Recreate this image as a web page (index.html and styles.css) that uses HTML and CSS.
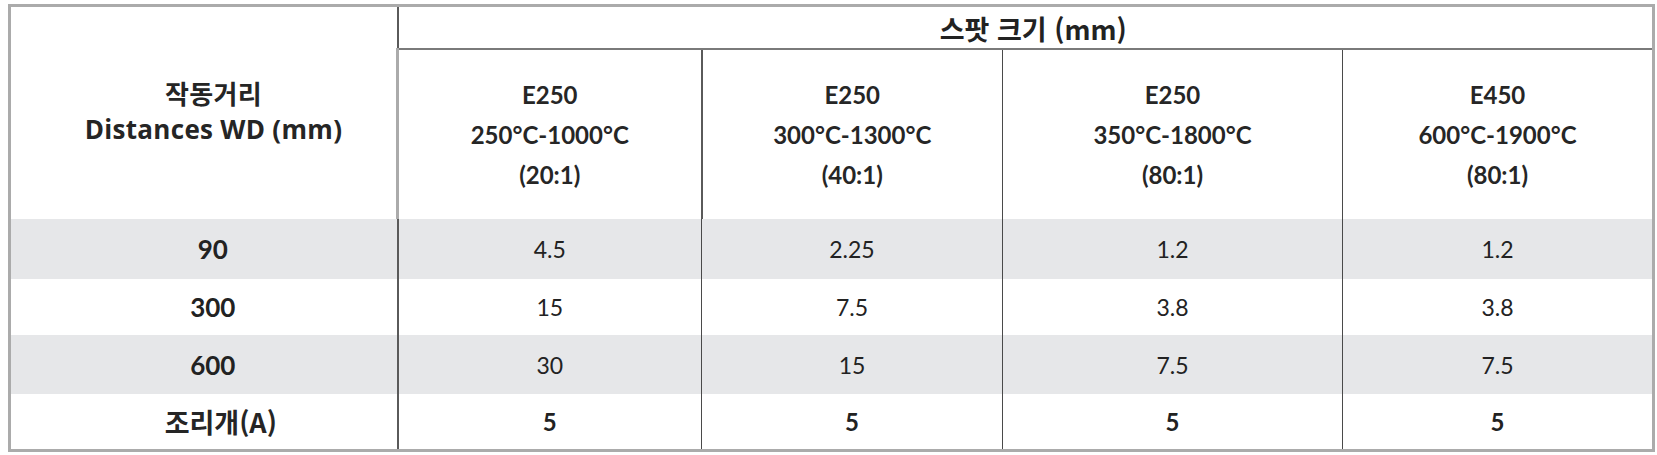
FILE: index.html
```html
<!DOCTYPE html>
<html lang="ko">
<head>
<meta charset="utf-8">
<link rel="stylesheet" href="styles.css">
</head>
<body>
<div class="page">
<table class="spec">
  <colgroup>
    <col class="c1"><col class="c2"><col class="c3"><col class="c4"><col class="c5">
  </colgroup>
  <thead>
    <tr class="h1">
      <th class="label" rowspan="2">작동거리<br>Distances WD (mm)</th>
      <th class="group" colspan="4">스팟 크기 (mm)</th>
    </tr>
    <tr class="h2">
      <th class="model">E250<br>250°C-1000°C<br>(20:1)</th>
      <th class="model">E250<br>300°C-1300°C<br>(40:1)</th>
      <th class="model">E250<br>350°C-1800°C<br>(80:1)</th>
      <th class="model">E450<br>600°C-1900°C<br>(80:1)</th>
    </tr>
  </thead>
  <tbody>
    <tr class="r1 shade">
      <th class="dist">90</th><td>4.5</td><td>2.25</td><td>1.2</td><td>1.2</td>
    </tr>
    <tr class="r2">
      <th class="dist">300</th><td>15</td><td>7.5</td><td>3.8</td><td>3.8</td>
    </tr>
    <tr class="r3 shade">
      <th class="dist">600</th><td>30</td><td>15</td><td>7.5</td><td>7.5</td>
    </tr>
    <tr class="r4">
      <th class="kr">조리개(A)</th><td class="bold">5</td><td class="bold">5</td><td class="bold">5</td><td class="bold">5</td>
    </tr>
  </tbody>
</table>
</div>
</body>
</html>
```
FILE: styles.css
```css
html, body {
  margin: 0;
  padding: 0;
  background: #ffffff;
}
.page {
  padding: 4px 0 0 8px;
}
.spec {
  border-collapse: collapse;
  table-layout: fixed;
  width: 1644px;
  border: 3px solid #ababab;
  color: #222222;
  font-family: Lato, "Liberation Sans", sans-serif;
}
.c1 { width: 388px; }
.c2 { width: 304px; }
.c3 { width: 301px; }
.c4 { width: 340px; }
.c5 { width: 311px; }

.spec th, .spec td {
  padding: 0;
  text-align: center;
  vertical-align: middle;
  border-left: 1px solid #4a4a4a;
  border-right: 1px solid #4a4a4a;
}
.spec th:first-child {
  border-left: 3px solid #ababab;
  border-right: 2px solid #5a5a5a;
}
.spec tr > :last-child {
  border-right: 3px solid #ababab;
}
.spec .label {
  font-family: "Open Sans", "Noto Sans CJK KR", sans-serif;
  font-weight: 700;
  font-size: 26px;
  letter-spacing: 0.3px;
  line-height: 35px;
  color: #252525;
  padding-left: 20px;
  padding-bottom: 2px;
}
.spec .kr {
  font-family: "Noto Sans CJK KR", sans-serif;
  font-weight: 700;
  font-size: 27px;
  color: #252525;
  padding-left: 34px;
}
.h1 { height: 43px; }
.spec .group {
  font-family: "Noto Sans CJK KR", sans-serif;
  font-weight: 700;
  font-size: 27px;
  border-bottom: 2px solid #7a7a7a;
  padding-top: 2px;
  padding-left: 16px;
}
.h2 { height: 170px; }
.spec .model {
  font-weight: 700;
  font-size: 24px;
  line-height: 40px;
  color: #262626;
}
.r1 { height: 60px; }
.r2 { height: 56px; }
.r3 { height: 59px; }
.r4 { height: 56px; }
.shade th, .shade td { background: #e6e7e9; }
.spec .dist {
  font-weight: 700;
  font-size: 26px;
  padding-left: 18px;
}
.spec td {
  font-size: 23px;
}
.spec td.bold {
  font-weight: 700;
  font-size: 24px;
}
```
